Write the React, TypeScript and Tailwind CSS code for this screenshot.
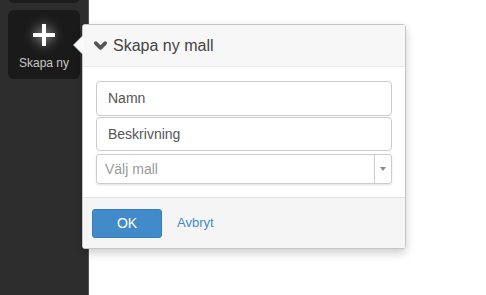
import { ChevronDown } from 'lucide-react';

export default function App() {
    return (
        <div className="relative flex h-[295px] w-[486px] overflow-hidden bg-white font-['Liberation_Sans',Arial,sans-serif]">
            <aside className="flex w-[89px] flex-col border-r border-[#555] bg-[#2d2d2d]">
                <div className="mx-2 -mt-6 h-[27px] rounded-md bg-[#1c1c1c]" />
                <button className="mx-2 mt-[7px] flex h-[69px] flex-col items-center rounded-md bg-[#1a1a1a] pt-[14px]">
                    <span className="relative block h-[22px] w-[22px] drop-shadow-[0_0_6px_rgba(255,255,255,0.7)]">
                        <span className="absolute left-[9px] top-0 h-[22px] w-[4px] bg-white" />
                        <span className="absolute left-0 top-[9px] h-[4px] w-[22px] bg-white" />
                    </span>
                    <span className="mt-[8px] text-[12px] text-[#c8c8c8]">Skapa ny</span>
                </button>
            </aside>

            <div className="absolute left-[82px] top-[24px] w-[324px] rounded-[3px] border border-[#c5c5c5] bg-white shadow-[0_4px_10px_rgba(0,0,0,0.2)]">
                <div className="absolute -left-[10px] top-[10px] h-0 w-0 border-y-[10px] border-r-[10px] border-y-transparent border-r-[#c5c5c5]" />
                <div className="absolute -left-[9px] top-[10px] h-0 w-0 border-y-[10px] border-r-[10px] border-y-transparent border-r-[#fafafa]" />
                <div className="flex h-[42px] items-center gap-[3px] border-b border-[#ebebeb] bg-[#f7f7f7] pl-[8px] text-[16px] text-[#444]">
                    <ChevronDown size={19} strokeWidth={4.5} className="text-[#555]" />
                    <span>Skapa ny mall</span>
                </div>
                <div className="flex flex-col px-[13px] pb-[13px] pt-[14px]">
                    <div className="flex h-[35px] items-center rounded-[4px] border border-[#ccc] px-[11px] text-[14px] text-[#555]">Namn</div>
                    <div className="mt-px flex h-[34px] items-center rounded-[4px] border border-[#ccc] px-[11px] text-[14px] text-[#555]">Beskrivning</div>
                    <div className="mt-[3px] flex h-[30px] items-center rounded-[3px] border border-[#ccc] shadow-[0_1px_2px_rgba(0,0,0,0.12)]">
                        <span className="flex-1 pl-[8px] text-[14px] text-[#999]">Välj mall</span>
                        <span className="flex h-full w-[17px] items-center justify-center border-l border-[#ccc]">
                            <span className="h-0 w-0 border-x-[3px] border-t-[4px] border-x-transparent border-t-[#888]" />
                        </span>
                    </div>
                </div>
                <div className="flex h-[51px] items-center gap-[15px] border-t border-[#e3e3e3] bg-[#f5f5f5] pl-[9px]">
                    <button className="h-[29px] w-[70px] rounded-[3px] border border-[#357ebd] bg-[#428bca] text-[14px] text-white">OK</button>
                    <span className="text-[13px] text-[#428bca]">Avbryt</span>
                </div>
            </div>
        </div>
    );
}
